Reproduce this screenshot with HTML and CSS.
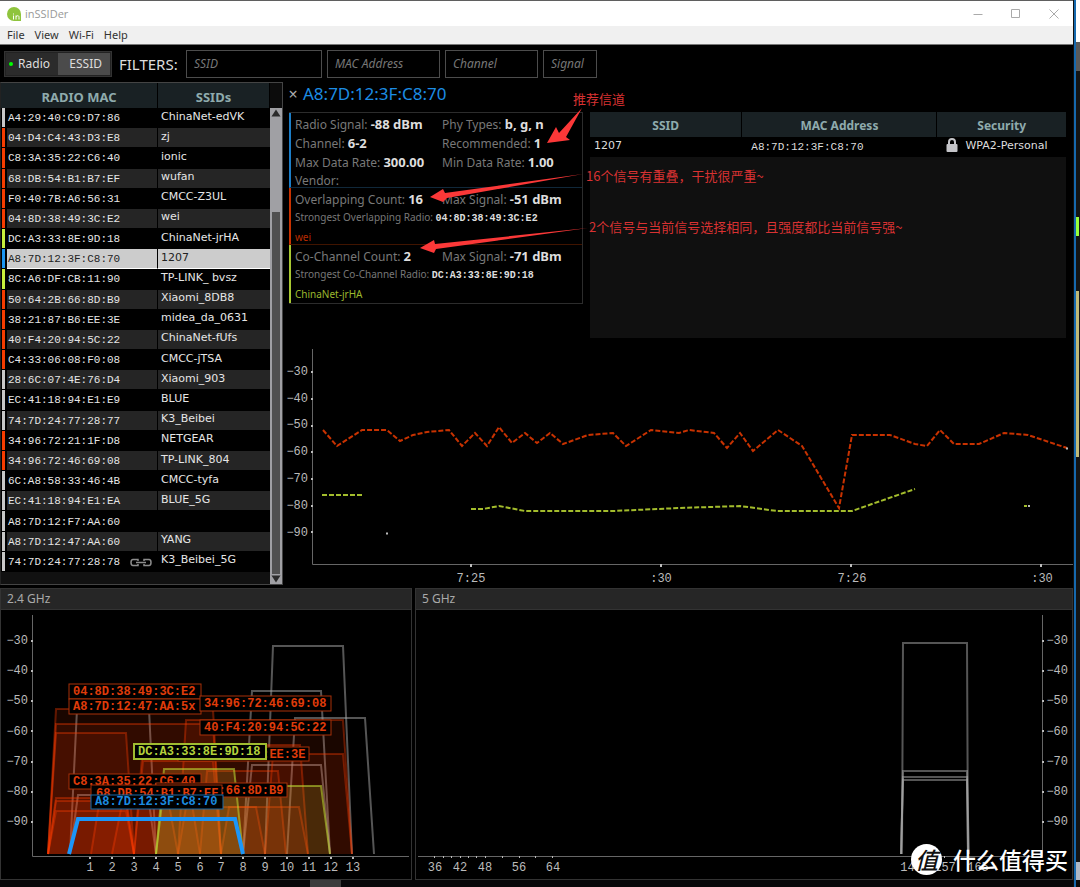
FILE: index.html
```html
<!DOCTYPE html>
<html lang="en">
<head>
<meta charset="utf-8">
<title>inSSIDer</title>
<link rel="stylesheet" href="styles.css">
</head>
<body>
<div class="desktop">
<div class="window">
  <header class="titlebar">
    <svg class="logo" viewBox="0 0 14 14" aria-hidden="true"><path d="M7 0a7 7 0 1 0 0 14h7V7A7 7 0 0 0 7 0z" fill="#8fc43d"/><path d="M6.500 8.500v4M6.500 6.500v1M9 8.500v4M9 9.500q3-2 3 1v2" stroke="#fff" fill="none"/></svg>
    <span class="app-name">inSSIDer</span>
    <div class="window-buttons">
      <button aria-label="Minimize"><svg viewBox="0 0 10 10"><path d="M0.500 5.500h9"/></svg></button>
      <button aria-label="Maximize"><svg viewBox="0 0 10 10"><path d="M0.500 0.500h8v8h-8z"/></svg></button>
      <button aria-label="Close"><svg viewBox="0 0 10 10"><path d="M0.500 0.500l9 9M9.500 0.500l-9 9"/></svg></button>
    </div>
  </header>
  <nav class="menubar"><button>File</button><button>View</button><button>Wi-Fi</button><button>Help</button></nav>

  <div class="toolbar">
    <div class="toggle"><button class="on"><i class="led"></i>Radio</button><button class="essid">ESSID</button></div>
    <span class="filters-label">FILTERS:</span>
    <input class="f-ssid" placeholder="SSID" aria-label="SSID">
    <input class="f-mac" placeholder="MAC Address" aria-label="MAC Address">
    <input class="f-channel" placeholder="Channel" aria-label="Channel">
    <input class="f-signal" placeholder="Signal" aria-label="Signal">
  </div>

  <main class="middle">
    <section class="list">
      <table class="radios">
        <thead><tr><th colspan="2">RADIO MAC</th><th>SSIDs</th></tr></thead>
        <tbody>
          <tr><td class="bar w"></td><td class="mac">A4:29:40:C9:D7:86</td><td>ChinaNet-edVK</td></tr>
          <tr><td class="bar r"></td><td class="mac">04:D4:C4:43:D3:E8</td><td>zj</td></tr>
          <tr><td class="bar r"></td><td class="mac">C8:3A:35:22:C6:40</td><td>ionic</td></tr>
          <tr><td class="bar r"></td><td class="mac">68:DB:54:B1:B7:EF</td><td>wufan</td></tr>
          <tr><td class="bar r"></td><td class="mac">F0:40:7B:A6:56:31</td><td>CMCC-Z3UL</td></tr>
          <tr><td class="bar r"></td><td class="mac">04:8D:38:49:3C:E2</td><td>wei</td></tr>
          <tr><td class="bar y"></td><td class="mac">DC:A3:33:8E:9D:18</td><td>ChinaNet-jrHA</td></tr>
          <tr class="selected"><td class="bar b"></td><td class="mac">A8:7D:12:3F:C8:70</td><td>1207</td></tr>
          <tr><td class="bar y"></td><td class="mac">8C:A6:DF:CB:11:90</td><td>TP-LINK_ bvsz</td></tr>
          <tr><td class="bar r"></td><td class="mac">50:64:2B:66:8D:B9</td><td>Xiaomi_8DB8</td></tr>
          <tr><td class="bar r"></td><td class="mac">38:21:87:B6:EE:3E</td><td>midea_da_0631</td></tr>
          <tr><td class="bar r"></td><td class="mac">40:F4:20:94:5C:22</td><td>ChinaNet-fUfs</td></tr>
          <tr><td class="bar r"></td><td class="mac">C4:33:06:08:F0:08</td><td>CMCC-jTSA</td></tr>
          <tr><td class="bar w"></td><td class="mac">28:6C:07:4E:76:D4</td><td>Xiaomi_903</td></tr>
          <tr><td class="bar w"></td><td class="mac">EC:41:18:94:E1:E9</td><td>BLUE</td></tr>
          <tr><td class="bar w"></td><td class="mac">74:7D:24:77:28:77</td><td>K3_Beibei</td></tr>
          <tr><td class="bar r"></td><td class="mac">34:96:72:21:1F:D8</td><td>NETGEAR</td></tr>
          <tr><td class="bar r"></td><td class="mac">34:96:72:46:69:08</td><td>TP-LINK_804</td></tr>
          <tr><td class="bar w"></td><td class="mac">6C:A8:58:33:46:4B</td><td>CMCC-tyfa</td></tr>
          <tr><td class="bar w"></td><td class="mac">EC:41:18:94:E1:EA</td><td>BLUE_5G</td></tr>
          <tr><td class="bar w"></td><td class="mac">A8:7D:12:F7:AA:60</td><td></td></tr>
          <tr><td class="bar w"></td><td class="mac">A8:7D:12:47:AA:60</td><td>YANG</td></tr>
          <tr><td class="bar w"></td><td class="mac"><div class="linked">74:7D:24:77:28:78<svg viewBox="0 0 22 9" aria-hidden="true"><path d="M8 3V1.500H3Q1 1.500 1 4.500T3 7.500H8V6M14 3V1.500H19Q21 1.500 21 4.500T19 7.500H14V6M6 4.500H16" fill="none" stroke="#8c8c8c" stroke-width="1.500"/></svg></div></td><td>K3_Beibei_5G</td></tr>
        </tbody>
      </table>
      <div class="scroll" aria-hidden="true">
        <div class="scroll-head"></div>
        <div class="arrow"><svg viewBox="0 0 11 10"><path d="M1 8.500L5.500 1.500L10 8.500z"/></svg></div>
        <div class="track"></div>
        <div class="thumb"></div>
        <div class="arrow"><svg viewBox="0 0 11 10"><path d="M1 1.500L5.500 8.500L10 1.500z"/></svg></div>
      </div>
    </section>

    <section class="right">
      <div class="detail-title"><button aria-label="Close details">×</button><h2>A8:7D:12:3F:C8:70</h2></div>
      <div class="details">
        <div class="card">
          <div class="sec blue">
            <p>Radio Signal: <b>-88 dBm</b></p><p>Phy Types: <b>b, g, n</b></p>
            <p>Channel: <b>6-2</b></p><p>Recommended: <b>1</b></p>
            <p>Max Data Rate: <b>300.00</b></p><p>Min Data Rate: <b>1.00</b></p>
            <p>Vendor:</p>
          </div>
          <div class="sec red">
            <p>Overlapping Count: <b>16</b></p><p>Max Signal: <b>-51 dBm</b></p>
            <p class="small">Strongest Overlapping Radio: <b>04:8D:38:49:3C:E2</b></p>
            <p class="small name">wei</p>
          </div>
          <div class="sec yellow">
            <p>Co-Channel Count: <b>2</b></p><p>Max Signal: <b>-71 dBm</b></p>
            <p class="small">Strongest Co-Channel Radio: <b>DC:A3:33:8E:9D:18</b></p>
            <p class="small name">ChinaNet-jrHA</p>
          </div>
        </div>
        <div class="networks">
          <table>
            <thead><tr><th>SSID</th><th>MAC Address</th><th>Security</th></tr></thead>
            <tbody><tr><td>1207</td><td class="mac">A8:7D:12:3F:C8:70</td><td><div class="security"><svg viewBox="0 0 12 14" aria-hidden="true"><path d="M3 7V4a3 3 0 0 1 6 0v3" fill="none" stroke="#c4c4c8" stroke-width="2"/><rect y="6" x="0.500" width="11" height="8" rx="1" fill="#c4c4c8"/></svg>WPA2-Personal</div></td></tr></tbody>
          </table>
        </div>
      </div>
      <svg class="timegraph chart" viewBox="283 344 790 241" role="img" aria-label="Signal over time">
        <path class="axis" d="M312.500 349V564.500H1073"/>
        <path class="tick" d="M311 372h2M311 399h2M311 426h2M311 452h2M311 479h2M311 506h2M311 532h2M471 564v3M661 564v3M851 564v3M1041 564v3"/>
        <g class="ylab"><text x="308" y="375">−30</text><text x="308" y="402">−40</text><text x="308" y="428">−50</text><text x="308" y="455">−60</text><text x="308" y="482">−70</text><text x="308" y="509">−80</text><text x="308" y="536">−90</text></g>
        <g class="xlab"><text x="471" y="582">7:25</text><text x="661" y="582">:30</text><text x="852" y="582">7:26</text><text x="1042" y="582">:30</text></g>
        <polyline class="trace red-line" points="323,430 337,446 362,430 387,430 400,441 413,435 427,432 449,430 462,446 475,433 487,446 499,427 512,443 525,433 537,443 550,433 563,444 588,435 613,433 626,446 651,430 679,433 689,430 714,433 727,448 740,433 753,451 778,430 802,446 839,508 852,435 890,435 915,444 927,446 940,430 954,444 979,444 1004,433 1028,435 1067,448"/>
        <path class="trace yellow-line" d="M322 495H362M471 509L483 509L499 506L525 511H613L680 508L740 506L777 511H852L915 489M1024 506h3"/>
        <path class="tick" d="M386 533.500h2M1028 506h2M1066 448.500h2"/>
      </svg>
      <svg class="notes" viewBox="283 82 790 230" aria-label="Annotations">
        <g fill="#fb3838"><path d="M547 143L556 127L559 133L582 108L566 137L570 140z"/><path d="M430 197L443 189L445 193L583 174L447 198L443 202z"/><path d="M420 248L434 240L435 244L588 228L436 249L434 253z"/></g>
        <text x="573" y="104">推荐信道</text>
        <text x="586" y="181">16个信号有重叠，干扰很严重~</text>
        <text x="589" y="232">2个信号与当前信号选择相同，且强度都比当前信号强~</text>
      </svg>
    </section>
  </main>

  <div class="bands">
    <section class="band">
      <h3>2.4 GHz</h3>
      <svg class="chart" viewBox="1 610 410 269" role="img" aria-label="2.4 GHz channels">
        <path class="axis" d="M32.500 615V856.500H409"/>
        <path class="tick" d="M31 641h2M31 671h2M31 701h2M31 731h2M31 762h2M31 792h2M31 822h2"/>
        <g class="ylab"><text x="28" y="644">−30</text><text x="28" y="674">−40</text><text x="28" y="704">−50</text><text x="28" y="735">−60</text><text x="28" y="765">−70</text><text x="28" y="795">−80</text><text x="28" y="825">−90</text></g>
        <path class="tick" d="M90 857v2M112 857v2M134 857v2M156 857v2M178 857v2M200 857v2M221 857v2M243 857v2M265 857v2M287 857v2M309 857v2M331 857v2M353 857v2"/>
        <g class="xlab"><text x="90" y="871">1</text><text x="112" y="871">2</text><text x="134" y="871">3</text><text x="156" y="871">4</text><text x="178" y="871">5</text><text x="200" y="871">6</text><text x="221" y="871">7</text><text x="243" y="871">8</text><text x="265" y="871">9</text><text x="287" y="871">10</text><text x="309" y="871">11</text><text x="331" y="871">12</text><text x="353" y="871">13</text></g>
        <g class="grey-shape">
          <path d="M265 854L273 646H343L352 854"/><path d="M243 854L252 691H321L330 854"/><path d="M287 854L295 718H365L374 854"/><path d="M243 854L252 765H321L330 854"/><path d="M70 854L77 709H149L156 854"/><path d="M70 854L78 795H148L156 854"/>
        </g>
        <g class="orange-shape">
          <path d="M48 854L56 709H213L221 854"/><path d="M48 854L56 724H213L221 854"/><path d="M48 854L56 733H126L134 854"/>
          <path d="M48 854L56 798H126L134 854"/><path d="M48 854L56 801H126L134 854"/><path d="M48 854L56 811H126L134 854"/>
          <path d="M91 854L99 804H169L178 854"/><path d="M112 854L122 804H192L200 854"/>
          <path d="M134 854L143 745H300L308 854"/><path d="M178 854L186 720H343L352 854"/><path d="M265 854L273 754H343L352 854"/>
          <path d="M200 854L207 771H278L286 854"/><path d="M178 854L186 807H256L265 854"/><path d="M221 854L229 807H299L308 854"/>
          <path d="M134 854L143 761H213L221 854"/>
        </g>
        <g class="yellow-shape"><path d="M156 854L164 769H234L243 854"/><path d="M156 854L164 786H321L330 854"/></g>
        <path class="blue-shape" d="M69 854L78 819H235L243 854"/>
        <g class="tags">
          <rect x="69" y="684" width="132" height="15"/><text x="73" y="695">04:8D:38:49:3C:E2</text>
          <rect x="69" y="699" width="132" height="15"/><text x="73" y="710">A8:7D:12:47:AA:5x</text>
          <rect x="200" y="696" width="131" height="15"/><text x="204" y="707">34:96:72:46:69:08</text>
          <rect x="200" y="720" width="131" height="15"/><text x="204" y="731">40:F4:20:94:5C:22</text>
          <rect x="178" y="747" width="131" height="14"/><text x="183" y="758">38:21:87:B6:EE:3E</text>
          <g class="yellow-tag"><rect x="134" y="744" width="132" height="15"/><text x="138" y="755">DC:A3:33:8E:9D:18</text></g>
          <rect x="69" y="774" width="132" height="15"/><text x="73" y="785">C8:3A:35:22:C6:40</text>
          <rect x="156" y="783" width="131" height="14"/><text x="161" y="794">50:64:2B:66:8D:B9</text>
          <rect x="91" y="785" width="131" height="15"/><text x="96" y="797">68:DB:54:B1:B7:EF</text>
          <g class="blue-tag"><rect x="91" y="795" width="132" height="14"/><text x="95" y="805">A8:7D:12:3F:C8:70</text></g>
        </g>
      </svg>
    </section>
    <section class="band five">
      <h3>5 GHz</h3>
      <svg class="chart" viewBox="416 610 656 269" role="img" aria-label="5 GHz channels">
        <path class="axis" d="M418 856.500H1042.500M1042.500 615V857"/>
        <path class="tick" d="M1042 641h2M1042 671h2M1042 701h2M1042 731h2M1042 762h2M1042 792h2M1042 822h2"/>
        <g class="ylab"><text x="1068" y="644">−30</text><text x="1068" y="674">−40</text><text x="1068" y="704">−50</text><text x="1068" y="735">−60</text><text x="1068" y="765">−70</text><text x="1068" y="795">−80</text><text x="1068" y="825">−90</text></g>
        <path class="tick" d="M434 857h1M443 857h1M451 857h1M460 857h1M468 857h1M476 857h1M485 857h1M502 857h1M519 857h1M535 857h1M552 857h1M944 857h1"/>
        <g class="xlab"><text x="435" y="871">36</text><text x="460" y="871">42</text><text x="485" y="871">48</text><text x="519" y="871">56</text><text x="553" y="871">64</text><text x="911" y="871">149</text><text x="945" y="871">157</text><text x="978" y="871">165</text></g>
        <g class="grey-shape"><path d="M902 854L903 643H967L968 854"/><path d="M901 854L903 771H967L968 854"/><path d="M901 854L903 777H967L968 854"/><path d="M901 854L903 780H967L969 854"/></g>
      </svg>
      <div class="watermark"><span class="seal">值</span><span>什么值得买</span></div>
    </section>
  </div>
  <div class="taskbar-edge"><i></i></div>
</div>
<div class="edge"></div>
</div>
</body>
</html>
```

FILE: styles.css
```css
* { box-sizing: border-box; }
body { margin: 0; background: #000; color: #ddd; font: 12px/18px "Noto Sans", "Noto Sans CJK SC", sans-serif; }
button { font: inherit; color: inherit; background: none; border: 0; padding: 0; }
h2, h3, p { margin: 0; font-weight: 400; }
.desktop { display: flex; min-height: 100vh; }
.window { flex: 1; min-width: 0; display: flex; flex-direction: column; border-top: 1px solid #5f5f5f; }
.edge { width: 7px; border-left: 1px solid #111; background:
  linear-gradient(#1669ae, #1669ae) 0 0 / 2px 100% no-repeat,
  linear-gradient(#98ff3c, #98ff3c) 2px 217px / 3px 19px no-repeat,
  linear-gradient(#c0ba78, #c0ba78) 2px 291px / 3px 166px no-repeat,
  linear-gradient(#fff 42px, #5a5a5a 42px 71px, #141414 71px 862px, #b0b8c4 862px 880px, #0c0c0c 880px); }

.titlebar { display: flex; align-items: center; height: 25px; padding-left: 7px; background: #fff; color: #999; font-family: "Open Sans", sans-serif; font-size: 11px; }
.logo { width: 14px; height: 14px; margin-right: 4px; }
.window-buttons { margin-left: auto; display: flex; gap: 28px; padding-right: 14px; }
.window-buttons svg { display: block; width: 10px; height: 10px; fill: none; stroke: #aaa; }
.menubar { display: flex; gap: 10px; height: 19px; padding-left: 7px; background: #f0f0f0; border-bottom: 1px solid #777; color: #333; font-size: 11px; line-height: 18px; }

.toolbar { display: flex; align-items: center; height: 37px; padding-left: 4px; }
.toggle { display: flex; height: 26px; border: 1px solid #333; padding: 1px; background: #222; color: #ddd; font-size: 12px; }
.toggle button { display: flex; align-items: center; justify-content: flex-end; width: 52px; padding-right: 8px; background: #2b2b2b; }
.toggle .essid { background: #4b4b4b; }
.led { width: 4px; height: 4px; margin-right: 5px; border-radius: 50%; background: #0f0; }
.filters-label { margin: 0 8px 0 7px; width: 59px; font-size: 15px; white-space: nowrap; }
.toolbar input { height: 28px; margin-right: 5px; padding: 0 7px; border: 1px solid #4c4c4c; background: #000; color: #ddd; font: italic 12px "Noto Sans", sans-serif; }
.toolbar input::placeholder { color: #777; opacity: 1; }
.f-ssid { width: 136px; }
.f-mac { width: 113px; }
.f-channel { width: 93px; }
.f-signal { width: 54px; }

.middle { display: flex; }
.list { display: flex; align-items: flex-start; width: 283px; border: 1px solid #444; border-left-color: #222; background: #111; flex: none; }
.radios { flex: 1; height: 489px; border-spacing: 0; background: #000; color: #e6e6e6; font: 11px "DejaVu Sans", sans-serif; }
th { height: 25px; padding: 2px 0 0; background: #192124; border-right: 1px solid #000; color: #8fabad; font: bold 12px "Noto Sans", sans-serif; }
.radios th { font-size: 13px; }
.radios td { height: 20px; padding: 0 3px 3px; border-bottom: 1px solid #000; line-height: 15px; white-space: nowrap; background-clip: padding-box; }
.radios td.mac, .mac { font-family: "Liberation Mono", monospace; font-size: 11px; }
.radios td.mac { width: 151px; padding: 2px 0 0 1px; border-right: 1px solid #000; }
.radios td.bar { width: 6px; padding: 0; border-left: 1px solid #000; border-right: 2px solid #000; }
.radios tbody tr:nth-child(even) td { background-color: #252525; }
.radios tr.selected td.mac, .radios tr.selected td:last-child { background-color: #ccc !important; color: #222; border-bottom-color: #fff; }
.radios tbody td.w { background-color: #c8c8c8 !important; }
.radios tbody td.r { background-color: #f53c00 !important; }
.radios tbody td.y { background-color: #c8f03c !important; }
.radios tbody td.b { background-color: #1c96f0 !important; }
.linked { display: flex; align-items: center; gap: 10px; }
.linked svg { width: 22px; height: 9px; }
.scroll { display: flex; flex-direction: column; align-self: stretch; width: 12px; background: #a0a0a4; }
.scroll-head { height: 25px; background: #0c0c0c; }
.arrow svg { display: block; width: 12px; height: 10px; fill: #2a2a2a; }
.track { height: 94px; }
.thumb { flex: 1; margin: 0 2px; background: #505050; }

.right { position: relative; flex: 1; min-width: 0; display: flex; flex-direction: column; }
.detail-title { display: flex; align-items: center; height: 30px; padding: 0 0 6px 5px; }
.detail-title button { width: 10px; margin-right: 5px; color: #aaa; font-size: 16px; }
.detail-title h2 { color: #1c8de4; font-size: 17px; }
.details { display: flex; gap: 7px; padding: 0 7px 0 6px; height: 232px; align-items: flex-start; }
.card { width: 294px; flex: none; border: 1px solid #2c2c2c; border-left: 0; color: #787878; }
.card b { color: #ddd; font-size: 13px; }
.sec { display: grid; grid-template-columns: 147px 1fr; padding: 2px 0 0 4px; border-left: 2px solid; border-bottom: 1px solid; align-content: start; white-space: nowrap; }
.sec.blue { height: 75px; border-color: #1c7ec8; border-bottom-color: #10283a; }
.sec.red { height: 57px; border-color: #c83200; border-bottom-color: #401400; }
.sec.yellow { height: 58px; border-color: #a8c832; border-bottom: 0; }
.small { grid-column: 1 / -1; font-size: 10px; line-height: 16px; }
.card .small b { font-family: "Liberation Mono", monospace; font-size: 10px; }
.name { line-height: 20px; }
.red .name { color: #b82c00; }
.yellow .name { color: #9cb82e; }
.networks { flex: 1; height: 226px; background: #101010; }
.networks table { width: 100%; border-spacing: 0; table-layout: fixed; color: #ddd; font: 11px "DejaVu Sans", sans-serif; }
.networks th:first-child { width: 32%; }
.networks th:last-child { width: 27%; border: 0; }
.networks td { height: 20px; padding: 0 4px 4px; background: #000; line-height: 15px; }
.networks td.mac { padding: 0 9px; }
.security { display: flex; align-items: center; gap: 7px; padding-left: 5px; }
.security svg { width: 12px; height: 14px; }

.chart { display: block; width: 100%; height: auto; overflow: visible; font: 12px "Liberation Mono", monospace; fill: #bbb; }
.axis { fill: none; stroke: #666; }
.tick { fill: none; stroke: #bbb; stroke-width: 2; }
.ylab { text-anchor: end; }
.xlab { text-anchor: middle; }
.trace { fill: none; stroke-width: 2; stroke-dasharray: 5 2; }
.red-line { stroke: #c83200; }
.yellow-line { stroke: #a3bc2c; }
.notes { position: absolute; top: 0; left: 0; width: 100%; pointer-events: none; font: 13px "Noto Sans CJK SC", sans-serif; fill: #d83232; }

.bands { display: flex; gap: 3px; margin-top: 3px; }
.band { width: 412px; border: 1px solid #333; flex: none; }
.band.five { position: relative; flex: 1; min-width: 0; }
.band h3 { height: 21px; padding-left: 6px; background: #262626; border-bottom: 1px solid #333; color: #aaa; font-size: 12px; line-height: 20px; }
.grey-shape path { fill: none; stroke: #aaa; stroke-width: 2; stroke-opacity: .5; }
.orange-shape path { fill: #ff3c00; fill-opacity: .1; stroke: #ff3c00; stroke-opacity: .36; stroke-width: 2; }
.yellow-shape path { fill: #c8c832; fill-opacity: .16; stroke: #b8d030; stroke-opacity: .6; stroke-width: 2; }
.blue-shape { fill: none; stroke: #1c96f8; stroke-width: 4; }
.tags { font-weight: bold; fill: #e03c0a; }
.tags rect { fill: #000; stroke: #a83008; stroke-width: 1; }
.tags .yellow-tag { fill: #b4d23c; }
.tags .yellow-tag rect { stroke: #a0bc30; stroke-width: 2; }
.tags .blue-tag { fill: #1c8ce0; }
.tags .blue-tag rect { stroke: #186aa8; }
.watermark { position: absolute; right: 4px; bottom: 4px; display: flex; align-items: center; gap: 11px; color: #fff; font: 500 23px/31px "Noto Sans CJK SC", sans-serif; }
.seal { width: 31px; height: 31px; border-radius: 50%; background: #fff; color: #111; text-align: center; font-style: italic; }
.taskbar-edge { flex: 1; padding-left: 310px; background: #08080a; }
.taskbar-edge i { display: block; width: 31px; height: 100%; background: #3c3c3c; }
```
